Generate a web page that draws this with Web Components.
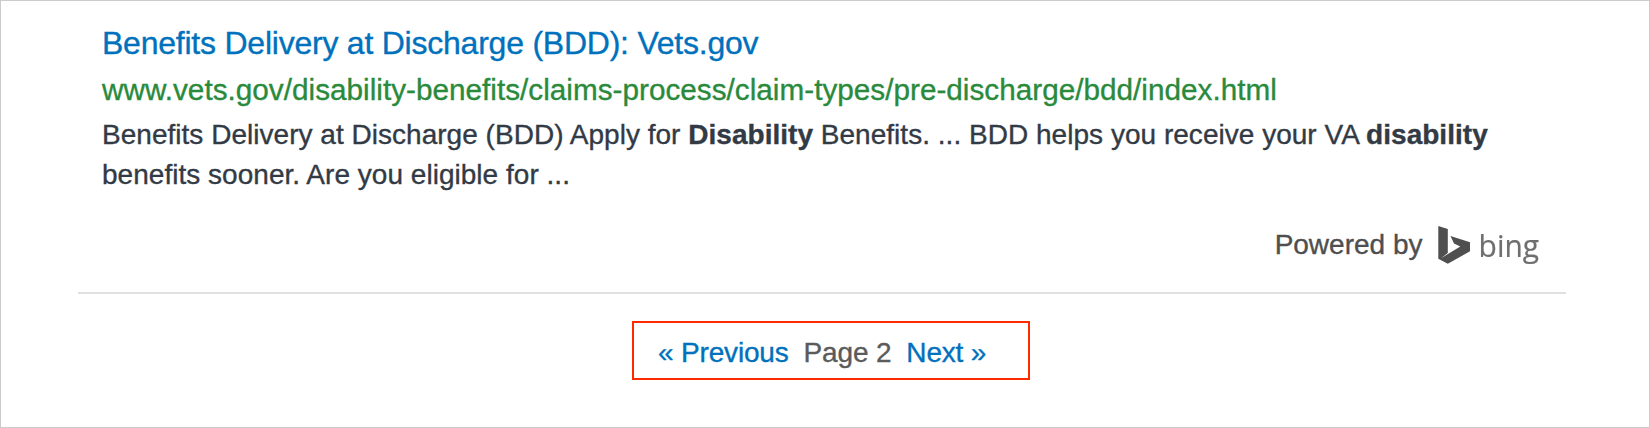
<!DOCTYPE html>
<html lang="en"><head><meta charset="utf-8"><title>Search results</title>
<style>
html,body{margin:0;height:100%}
body{font-family:"Liberation Sans",Arial,sans-serif;background:#fff;-webkit-text-stroke:.35px}
</style></head><body>
<results-page>
<search-result heading="Benefits Delivery at Discharge (BDD): Vets.gov" url="www.vets.gov/disability-benefits/claims-process/claim-types/pre-discharge/bdd/index.html">Benefits Delivery at Discharge (BDD) Apply for <b>Disability</b> Benefits. ... BDD helps you receive your VA <b>disability</b> benefits sooner. Are you eligible for ...</search-result>
<powered-by slot="credit">Powered by</powered-by>
<page-nav slot="pager" page="2"></page-nav>
</results-page>
<script>
class Base extends HTMLElement{constructor(){super();this.attachShadow({mode:"open"})}}
customElements.define("results-page",class extends Base{connectedCallback(){this.shadowRoot.innerHTML=`
<style>:host{display:block;box-sizing:border-box;height:428px;border:1px solid #ccc;overflow:hidden;background:#fff}
main{margin:0 83px 0 77px;padding:18px 24px 0;height:293px;box-sizing:border-box;border-bottom:2px solid #e0e0e0;display:flex;flex-direction:column}
footer{margin:27px 83px 0 77px;display:flex;justify-content:flex-start;padding-left:554px}
</style><main><slot></slot><slot name="credit"></slot></main><footer><slot name="pager"></slot></footer>`}});
customElements.define("search-result",class extends Base{connectedCallback(){this.shadowRoot.innerHTML=`
<style>:host{display:block;color:#323a45;font-size:28px;line-height:40px;letter-spacing:.025px}
h3{margin:0;font-weight:400;font-size:32px;line-height:48px;letter-spacing:-.23px}a{color:#0071bc;text-decoration:none;white-space:nowrap}
cite{display:block;font-style:normal;font-size:29.7px;letter-spacing:.02px;color:#2a8a3c;line-height:45px;white-space:nowrap}
p{margin:2.5px 0 0}</style><h3><a href="#">${this.getAttribute("heading")}</a></h3><cite>${this.getAttribute("url")}</cite><p><slot></slot></p>`}});
customElements.define("powered-by",class extends Base{connectedCallback(){this.shadowRoot.innerHTML=`
<style>:host{display:flex;justify-content:flex-end;align-items:flex-start;font-size:28px;line-height:40px;color:#4f4f4f;margin:30px 2px 0 0}
svg{display:block;width:102px;height:38px;margin:1.5px 0 0 15.5px;overflow:visible;filter:blur(.35px)}</style><span><slot></slot></span>
<svg viewBox="0 0 102 38" aria-label="bing"><path fill="#4f4f4f" d="M.3 0L9.8 3V27L3 32.2L22.3 20.5L16 17.5L12.5 10L32 16.2V25.3L9.8 37.8L.3 32.7Z"/><text x="40.6" y="30.5" font-size="31" fill="#6e6e6e" stroke="#6e6e6e" stroke-width=".2" font-family="Open Sans, sans-serif" textLength="60.5" lengthAdjust="spacingAndGlyphs">bing</text></svg>`}});
customElements.define("page-nav",class extends Base{connectedCallback(){this.shadowRoot.innerHTML=`
<style>:host{display:flex;box-sizing:border-box;width:398px;height:59px;border:2px solid #ff2a00;font-size:28px;line-height:55px;letter-spacing:-.17px;padding:2px 0 0 24px;gap:15px;color:#5b5b5b;white-space:nowrap}a{color:#0071bc;text-decoration:none}</style><a href="#">« Previous</a><span>Page ${this.getAttribute("page")}</span><a href="#">Next »</a>`}});
</script></body></html>
